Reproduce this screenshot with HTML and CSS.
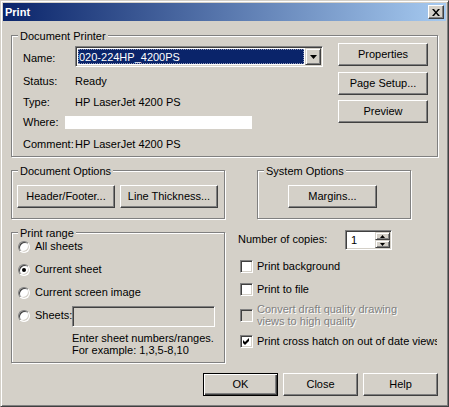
FILE: index.html
```html
<!DOCTYPE html>
<html>
<head>
<meta charset="utf-8">
<title>Print</title>
<link rel="stylesheet" href="styles.css">
</head>
<body>
<div class="window">
  <div class="titlebar">
    <span class="title">Print</span>
    <span class="close-btn"><svg width="8" height="7" viewBox="0 0 8 7"><path d="M0 0H2L4 2.5L6 0H8L5 3.5L8 7H6L4 4.5L2 7H0L3 3.5Z" fill="#000"/></svg></span>
  </div>
  <div class="client">
    <div class="group printer">
      <div class="group-title">Document Printer</div>
      <div class="printer-body">
        <div class="fields">
          <div class="frow name-row">
            <span class="lbl">Name:</span>
            <div class="combo">
              <div class="combo-value">020-224HP_4200PS</div>
              <div class="combo-btn"><svg width="7" height="4" viewBox="0 0 7 4"><path d="M0 0H7L3.5 4Z" fill="#000"/></svg></div>
            </div>
          </div>
          <div class="frow status-row"><span class="lbl">Status:</span><span>Ready</span></div>
          <div class="frow type-row"><span class="lbl">Type:</span><span>HP LaserJet 4200 PS</span></div>
          <div class="frow where-row"><span class="lbl">Where:</span><span class="where-field"></span></div>
          <div class="frow comment-row"><span class="lbl">Comment:</span><span>HP LaserJet 4200 PS</span></div>
        </div>
        <div class="side-buttons">
          <button type="button" class="btn">Properties</button>
          <button type="button" class="btn setup-btn">Page Setup...</button>
          <button type="button" class="btn preview-btn">Preview</button>
        </div>
      </div>
    </div>

    <div class="options-row">
      <div class="group doc-options">
        <div class="group-title">Document Options</div>
        <div class="group-buttons">
          <button type="button" class="btn">Header/Footer...</button>
          <button type="button" class="btn">Line Thickness...</button>
        </div>
      </div>
      <div class="group sys-options">
        <div class="group-title">System Options</div>
        <div class="group-buttons">
          <button type="button" class="btn margins-btn">Margins...</button>
        </div>
      </div>
    </div>

    <div class="lower-row">
      <div class="group print-range">
        <div class="group-title">Print range</div>
        <div class="radio-row first"><span class="radio"></span><span>All sheets</span></div>
        <div class="radio-row"><span class="radio checked"></span><span>Current sheet</span></div>
        <div class="radio-row"><span class="radio"></span><span>Current screen image</span></div>
        <div class="radio-row sheets-row"><span class="radio"></span><span class="sheets-label">Sheets:</span><span class="edit"></span></div>
        <div class="hint">Enter sheet numbers/ranges.<br>For example: 1,3,5-8,10</div>
      </div>
      <div class="right-col">
        <div class="copies-row">
          <span class="copies-label">Number of copies:</span>
          <div class="spinner">
            <span class="spin-value">1</span>
            <div class="spin-btns">
              <span class="spin-btn"><svg width="5" height="3" viewBox="0 0 5 3"><path d="M2.5 0L5 3H0Z" fill="#000"/></svg></span>
              <span class="spin-btn"><svg width="5" height="3" viewBox="0 0 5 3"><path d="M0 0H5L2.5 3Z" fill="#000"/></svg></span>
            </div>
          </div>
        </div>
        <div class="check-row r1"><span class="check"></span><span>Print background</span></div>
        <div class="check-row r2"><span class="check"></span><span>Print to file</span></div>
        <div class="check-row r3"><span class="check disabled"></span><span class="disabled-text">Convert draft quality drawing<br>views to high quality</span></div>
        <div class="check-row r4"><span class="check"><svg width="7" height="7" viewBox="0 0 7 7"><path d="M0 2L2 4L6 0V3L2 7L0 5Z" fill="#000"/></svg></span><span>Print cross hatch on out of date views</span></div>
      </div>
    </div>

    <div class="dialog-buttons">
      <button type="button" class="btn default">OK</button>
      <button type="button" class="btn">Close</button>
      <button type="button" class="btn">Help</button>
    </div>
  </div>
</div>
</body>
</html>
```
FILE: styles.css
```css
* { box-sizing: border-box; }
html, body { margin: 0; padding: 0; }
body {
  background: #d4d0c8;
  font-family: "Liberation Sans", Arial, sans-serif;
  font-size: 11px;
  line-height: 13px;
  color: #000;
}
.window {
  width: 449px;
  height: 407px;
  border: 1px solid;
  border-color: #d4d0c8 #404040 #404040 #d4d0c8;
  box-shadow: inset 1px 1px 0 #fff, inset -1px -1px 0 #808080;
  padding: 2px;
  background: #d4d0c8;
}
.titlebar {
  height: 18px;
  background: linear-gradient(to right, #0a246a, #a6caf0);
  display: flex;
  align-items: center;
  justify-content: space-between;
  padding: 0 2px;
}
.title { color: #fff; font-weight: bold; }
.close-btn {
  width: 16px;
  height: 14px;
  background: #d4d0c8;
  border: 1px solid;
  border-color: #fff #404040 #404040 #fff;
  box-shadow: inset -1px -1px 0 #808080;
  display: flex;
  align-items: center;
  justify-content: center;
}
.close-btn svg { display: block; }

.client { padding: 14px 8px 0 8px; }

.group {
  border: 1px solid #808080;
  box-shadow: inset 1px 1px 0 #fff, 1px 1px 0 #fff;
}
.group-title {
  width: max-content;
  margin: -6px 0 0 6px;
  padding: 0 2px;
  background: #d4d0c8;
}

.btn {
  appearance: none;
  margin: 0;
  height: 23px;
  padding: 0;
  border: 1px solid;
  border-color: #fff #404040 #404040 #fff;
  box-shadow: inset -1px -1px 0 #808080;
  background: #d4d0c8;
  font: inherit;
  color: #000;
  display: flex;
  align-items: center;
  justify-content: center;
  white-space: nowrap;
}
.btn.default {
  border-color: #000;
  box-shadow: inset 1px 1px 0 #fff, inset -1px -1px 0 #404040, inset -2px -2px 0 #808080;
}

/* Document Printer */
.printer { height: 122px; }
.printer-body {
  display: flex;
  justify-content: space-between;
  padding: 0 9px 0 11px;
}
.fields { display: flex; flex-direction: column; }
.frow { display: flex; height: 13px; }
.lbl { width: 52px; flex-shrink: 0; }
.name-row { margin-top: 3px; height: 21px; }
.name-row .lbl { margin-top: 6px; }
.status-row { margin-top: 8px; }
.type-row { margin-top: 8px; }
.where-row { margin-top: 7px; }
.where-row .lbl { width: 42px; }
.where-field { width: 187px; height: 13px; background: #fff; }
.comment-row { margin-top: 9px; }

.combo {
  width: 248px;
  height: 21px;
  display: flex;
  padding: 1px;
  border: 1px solid;
  border-color: #808080 #fff #fff #808080;
  box-shadow: inset 1px 1px 0 #404040, inset -1px -1px 0 #d4d0c8;
  background: #fff;
}
.combo-value {
  flex: 1;
  margin: 1px;
  padding: 2px 0 0 1px;
  background: #0a246a;
  color: #fff;
  outline: 1px dotted #8f96b8;
  outline-offset: -1px;
}
.combo-btn {
  width: 16px;
  height: 17px;
  border: 1px solid;
  border-color: #d4d0c8 #404040 #404040 #d4d0c8;
  box-shadow: inset 1px 1px 0 #fff, inset -1px -1px 0 #808080;
  background: #d4d0c8;
  display: flex;
  align-items: center;
  justify-content: center;
}
.combo-btn svg { display: block; }

.side-buttons { display: flex; flex-direction: column; width: 90px; }
.setup-btn { margin-top: 6px; }
.preview-btn { margin-top: 5px; }

/* Options */
.options-row { display: flex; margin-top: 13px; }
.doc-options { width: 214px; height: 49px; }
.sys-options { width: 154px; height: 49px; margin-left: 32px; }
.group-buttons { display: flex; gap: 5px; margin-top: 7px; padding-left: 5px; }
.doc-options .btn { width: 98px; }
.sys-options .group-buttons { padding-left: 30px; }
.margins-btn { width: 89px; }

/* Lower area */
.lower-row { display: flex; align-items: flex-start; margin-top: 13px; }
.print-range { width: 214px; height: 131px; }
.radio-row {
  display: flex;
  align-items: center;
  height: 13px;
  margin: 10px 0 0 6px;
  white-space: nowrap;
}
.radio-row.first { margin-top: 0; }
.radio {
  width: 12px;
  height: 12px;
  flex-shrink: 0;
  margin-right: 5px;
  border-radius: 50%;
  border: 1px solid;
  border-color: #808080 #fff #fff #808080;
  box-shadow: inset 1px 1px 0 #404040, inset -1px -1px 0 #d4d0c8;
  background: #fff;
  display: flex;
  align-items: center;
  justify-content: center;
}
.radio.checked::after {
  content: "";
  width: 4px;
  height: 4px;
  border-radius: 50%;
  background: #000;
}
.sheets-row { height: 21px; margin-top: 7px; align-items: flex-start; }
.sheets-row .radio { margin-top: 4px; }
.sheets-label { width: 37px; flex-shrink: 0; margin-top: 3px; }
.edit {
  width: 143px;
  height: 21px;
  border: 1px solid;
  border-color: #808080 #fff #fff #808080;
  box-shadow: inset 1px 1px 0 #404040, inset -1px -1px 0 #d4d0c8;
  background: #d4d0c8;
}
.hint { margin: 5px 0 0 60px; line-height: 12px; }

.right-col { width: 199px; margin: -2px 0 0 13px; overflow: hidden; }
.copies-row { display: flex; height: 20px; }
.copies-label { width: 107px; flex-shrink: 0; margin-top: 3px; }
.spinner {
  width: 47px;
  height: 20px;
  display: flex;
  padding: 1px;
  border: 1px solid;
  border-color: #808080 #fff #fff #808080;
  box-shadow: inset 1px 1px 0 #404040, inset -1px -1px 0 #d4d0c8;
  background: #fff;
}
.spin-value { flex: 1; padding-left: 4px; line-height: 16px; }
.spin-btns { width: 15px; display: flex; flex-direction: column; }
.spin-btn {
  flex: 1;
  border: 1px solid;
  border-color: #d4d0c8 #404040 #404040 #d4d0c8;
  box-shadow: inset 1px 1px 0 #fff, inset -1px -1px 0 #808080;
  background: #d4d0c8;
  display: flex;
  align-items: center;
  justify-content: center;
}
.spin-btn svg { display: block; }

.check-row {
  display: flex;
  align-items: center;
  margin: 10px 0 0 2px;
  white-space: nowrap;
}
.check {
  width: 13px;
  height: 13px;
  flex-shrink: 0;
  margin-right: 4px;
  border: 1px solid;
  border-color: #808080 #fff #fff #808080;
  box-shadow: inset 1px 1px 0 #404040, inset -1px -1px 0 #d4d0c8;
  background: #fff;
  display: flex;
  align-items: center;
  justify-content: center;
}
.check svg { display: block; }
.check.disabled { background: #d4d0c8; }
.r3 { margin-top: 7px; line-height: 12px; }
.r4 { margin-top: 8px; }
.disabled-text { color: #808080; text-shadow: 1px 1px 0 #fff; }

.dialog-buttons {
  display: flex;
  justify-content: flex-end;
  gap: 5px;
  margin-top: 10px;
}
.dialog-buttons .btn { width: 75px; }
```
